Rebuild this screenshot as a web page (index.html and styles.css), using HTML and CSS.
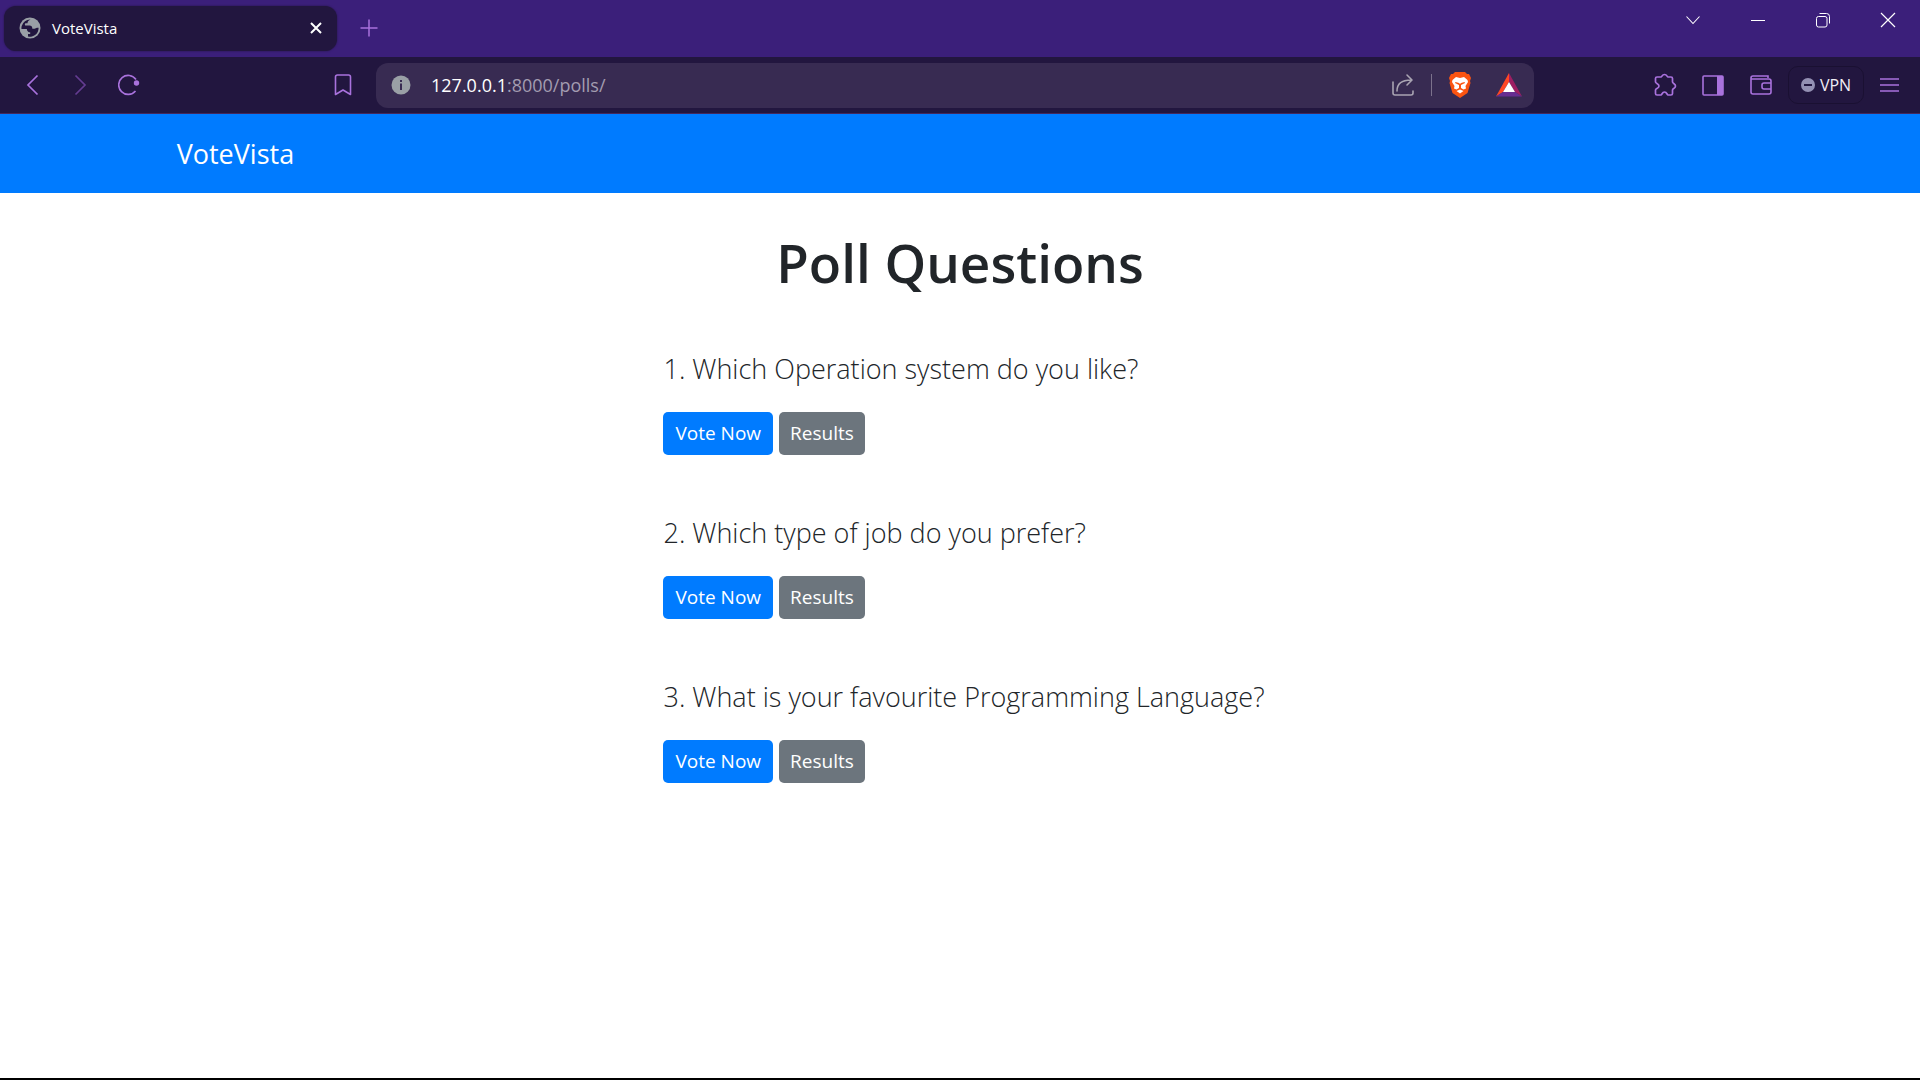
FILE: index.html
```html
<!DOCTYPE html>
<html lang="en">
<head>
<meta charset="utf-8">
<title>VoteVista</title>
<link rel="stylesheet" href="styles.css">
</head>
<body>
<div class="window">
  <header class="browser">
    <div class="tab-strip">
      <div class="tab">
        <svg width="22" height="22" viewBox="0 0 22 22"><circle cx="11" cy="11" r="10.5" fill="#9aa0a6"/><path d="M2.700 9A8.700 8.700 0 0 1 11.500 2.500C9.500 3.500 8.500 4.500 8.500 6.300H7C6 6.300 5.500 7.500 6.200 8.500H10.500C12.500 8.500 13.500 10 13.300 11.800H15.500C16.500 11.800 17 10.800 18 10.800H19.600A8.600 8.600 0 0 1 9 19.400V17H11.200V15.300C9.500 15.300 8 14.500 7.800 12H2.500Q2.300 10.500 2.700 9Z" fill="#22163f"/></svg>
        <span class="tab-title">VoteVista</span>
        <button class="icon-button" aria-label="Close tab"><svg width="12" height="12" viewBox="0 0 12 12" fill="none" stroke="#fff" stroke-width="2"><path d="M1 1L11 11M11 1L1 11"/></svg></button>
      </div>
      <button class="icon-button new-tab" aria-label="New tab"><svg width="18" height="18" viewBox="0 0 18 18" fill="none" stroke="#a972dd" stroke-width="1.500"><path d="M9 .5V17.500M.5 9H17.500"/></svg></button>
      <div class="window-controls">
        <button class="icon-button" aria-label="Search tabs"><svg width="16" height="16" viewBox="0 0 16 16" fill="none" stroke="#fff" stroke-width="1.100"><path d="M1.500 4.500L8 11.500L14.500 4.500"/></svg></button>
        <button class="icon-button" aria-label="Minimize"><svg width="16" height="16" viewBox="0 0 16 16" fill="none" stroke="#fff"><path d="M1 8.500H15"/></svg></button>
        <button class="icon-button" aria-label="Restore"><svg width="16" height="16" viewBox="0 0 16 16" fill="none" stroke="#fff"><rect x="1.500" y="4.500" width="10.500" height="10.500" rx="2"/><path d="M4.500 1.500H11.500A3 3 0 0 1 14.500 4.500V11.500"/></svg></button>
        <button class="icon-button" aria-label="Close"><svg width="16" height="16" viewBox="0 0 16 16" fill="none" stroke="#fff" stroke-width="1.200"><path d="M1 1L15 15M15 1L1 15"/></svg></button>
      </div>
    </div>
    <div class="toolbar">
      <div class="history">
        <button class="icon-button" aria-label="Back"><svg width="22" height="22" viewBox="0 0 22 22" fill="none" stroke="#a972dd" stroke-width="1.700"><path d="M15.500 1.500L6 11L15.500 20.500"/></svg></button>
        <button class="icon-button" aria-label="Forward"><svg width="22" height="22" viewBox="0 0 22 22" fill="none" stroke="#643c91" stroke-width="1.700"><path d="M5.500 1.500L15 11L5.500 20.500"/></svg></button>
        <button class="icon-button" aria-label="Reload"><svg width="22" height="22" viewBox="0 0 22 22" fill="none" stroke="#a972dd" stroke-width="1.600"><path d="M18 5.500A9.500 9.500 0 1 0 17.500 17"/><circle cx="18.500" cy="9" r="2.700" fill="#a972dd" stroke="none"/></svg></button>
      </div>
      <button class="icon-button" aria-label="Bookmark"><svg width="22" height="22" viewBox="0 0 22 22" fill="none" stroke="#a972dd" stroke-width="1.600" stroke-linejoin="round"><path d="M3.500 20.500V3Q3.500 1 5.500 1H16.500Q18.500 1 18.500 3V20.500L11 16Z"/></svg></button>
      <div class="address">
        <svg width="20" height="20" viewBox="0 0 20 20"><circle cx="10" cy="10" r="9.500" fill="#9aa0a6"/><path d="M9 5H11V7H9ZM9 8.500H11V15H9Z" fill="#382b52"/></svg>
        <a class="url" href="#"><b>127.0.0.1</b>:8000/polls/</a>
        <button class="icon-button" aria-label="Share"><svg width="24" height="24" viewBox="0 0 24 24" fill="none" stroke="#a9a4b2" stroke-width="1.600" stroke-linecap="round" stroke-linejoin="round"><path d="M2 9V20Q2 22 4 22H20Q22 22 22 20V18M6 18Q6 7 20 7M16 2L21 7L16 12"/></svg></button>
        <span class="divider"></span>
        <button class="icon-button" aria-label="Brave Shields"><svg width="24" height="28" viewBox="0 0 24 28"><path d="M7 1H17L19 3H21L23 7L22 10L22.500 12L19.500 22L12 27L4.500 22L1.500 12L2 10L1 7L3 3H5Z" fill="#fb5411"/><path d="M8 6L12 7L16 6L19.500 9L20 11L17.500 15L18 17.500L15.500 18.500L13 17V14L17 12L16.500 11L13 12L12 13L11 12L7.500 11L7 12L11 14V17L8.500 18.500L6 17.500L6.500 15L4 11L4.500 9ZM12 18.500L15.500 20L12 22.500L8.500 20Z" fill="#fff"/></svg></button>
        <button class="icon-button" aria-label="Brave Rewards"><svg width="26" height="24" viewBox="0 0 26 24"><path d="M13 0V9L7 19L0 23.500Z" fill="#ff4724"/><path d="M13 0L26 23.500L19 19L13 9Z" fill="#9e1f63"/><path d="M0 23.500L7 19H19L26 23.500Z" fill="#662d91"/><path d="M13 9L19 19H7Z" fill="#fff"/></svg></button>
      </div>
      <div class="tools">
        <button class="icon-button" aria-label="Extensions"><svg width="24" height="24" viewBox="0 0 24 24" fill="none" stroke="#a972dd" stroke-width="1.700" stroke-linejoin="round"><path d="M4 4H8C9 4 9 1.500 11.500 1.500S14 4 15 4H18Q19.500 4 19.500 5.500V9C19.500 10.500 22.500 10.500 22.500 13S19.500 15.500 19.500 17V20.500Q19.500 22 18 22H15C14 22 14 19 11.500 19S9 22 8 22H4Q2.500 22 2.500 20.500V17C2.500 15.500 6 15.500 6 13S2.500 10.500 2.500 9V5.500Q2.500 4 4 4Z"/></svg></button>
        <button class="icon-button" aria-label="Sidebar"><svg width="24" height="24" viewBox="0 0 24 24"><rect x="2" y="3" width="20" height="19" rx="1" fill="none" stroke="#a972dd" stroke-width="1.600"/><path d="M16 3H22V22H16Z" fill="#a972dd"/></svg></button>
        <button class="icon-button" aria-label="Wallet"><svg width="24" height="24" viewBox="0 0 24 24" fill="none" stroke="#a972dd" stroke-width="1.600"><path d="M19 5V3H4Q2 3 2 5V19Q2 21 4 21H20Q22 21 22 19V8Q22 6 20 6H2M22 10H15Q13 10 13 12V14Q13 16 15 16H22"/></svg></button>
        <button class="vpn"><svg width="14" height="14" viewBox="0 0 14 14"><circle cx="7" cy="7" r="7" fill="#9490b3"/><path d="M3 6H11V8H3Z" fill="#22163f"/></svg>VPN</button>
        <button class="icon-button" aria-label="Menu"><svg width="20" height="16" viewBox="0 0 20 16" fill="none" stroke="#a972dd" stroke-width="1.500"><path d="M0 2H19M0 8H19M0 14H19"/></svg></button>
      </div>
    </div>
  </header>
  <nav class="navbar"><a class="brand" href="#">VoteVista</a></nav>
  <main class="page">
    <h1 class="title">Poll Questions</h1>
    <div class="polls">
      <section class="poll">
        <h2 class="question">1. Which Operation system do you like?</h2>
        <div class="actions"><a class="button vote" href="#">Vote Now</a><a class="button results" href="#">Results</a></div>
      </section>
      <section class="poll">
        <h2 class="question">2. Which type of job do you prefer?</h2>
        <div class="actions"><a class="button vote" href="#">Vote Now</a><a class="button results" href="#">Results</a></div>
      </section>
      <section class="poll">
        <h2 class="question">3. What is your favourite Programming Language?</h2>
        <div class="actions"><a class="button vote" href="#">Vote Now</a><a class="button results" href="#">Results</a></div>
      </section>
    </div>
  </main>
</div>
</body>
</html>
```
FILE: styles.css
```css
* { box-sizing: border-box; }
body { margin: 0; background: #fff; color: #212529; font-family: "Open Sans", "Noto Sans", sans-serif; }
a { text-decoration: none; }
button { font: inherit; border: 0; padding: 0; background: none; }
svg { display: block; }

.window { display: flex; flex-direction: column; min-height: 100vh; border-bottom: 2px solid #000; }
.browser { background: #22163f; border-bottom: 1px solid #43285c; }
.icon-button { display: grid; place-items: center; flex: none; }

.tab-strip { display: flex; height: 57px; padding: 6px 0 6px 4px; background: #3b1f7a; }
.tab { display: flex; align-items: center; gap: 11px; width: 333px; padding: 0 15px 1px; border-radius: 12px; background: #22163f; box-shadow: 0 0 2px #22163f; }
.tab-title { flex: 1; color: #fff; font-size: 15px; }
.new-tab { margin-left: 23px; padding-bottom: 1px; }
.window-controls { display: flex; gap: 49px; margin-left: auto; padding-right: 24px; height: 28px; }

.toolbar { display: flex; align-items: center; height: 56px; padding: 0 20px 0 22px; }
.history { display: flex; gap: 26px; margin-right: 192px; }
.address { display: flex; align-items: center; flex: 0 1 1158px; height: 45px; margin-left: 22px; padding: 0 12px 0 15px; border-radius: 12px; background: #382b52; }
.url { flex: 1; margin-left: 20px; color: #a39cb0; font-size: 18px; }
.url b { color: #fff; font-weight: 400; }
.divider { width: 1px; height: 22px; margin: 0 16px; background: #7c728c; }
.address .icon-button + .icon-button { margin-left: 24px; }
.tools { display: flex; align-items: center; gap: 24px; margin-left: auto; }
.vpn { display: flex; align-items: center; justify-content: center; gap: 5px; width: 76px; height: 38px; margin: 0 -8px 0 -9px; border: 1px solid #1a1032; border-radius: 10px; color: #f1eef6; font-size: 16px; }

.navbar { display: flex; align-items: center; height: 79px; padding: 0 9.2%; background: #007bff; }
.brand { color: #fff; font-size: 27px; }

.page { flex: 1; padding: 36px 24px; }
.title { margin: 0; text-align: center; font-size: 53px; font-weight: 600; line-height: 68px; }
.polls { display: grid; gap: 57px; width: fit-content; margin: 51px auto 0; padding-left: 8px; }
.question { margin: 0 0 23px; font-size: 27px; font-weight: 300; line-height: 41px; }
.actions { display: flex; gap: 6px; }
.button { display: block; border-radius: 5px; color: #fff; font-size: 19px; line-height: 43px; }
.vote { padding: 0 12px; background: #007bff; }
.results { padding: 0 11px; background: #6c757d; }
```
